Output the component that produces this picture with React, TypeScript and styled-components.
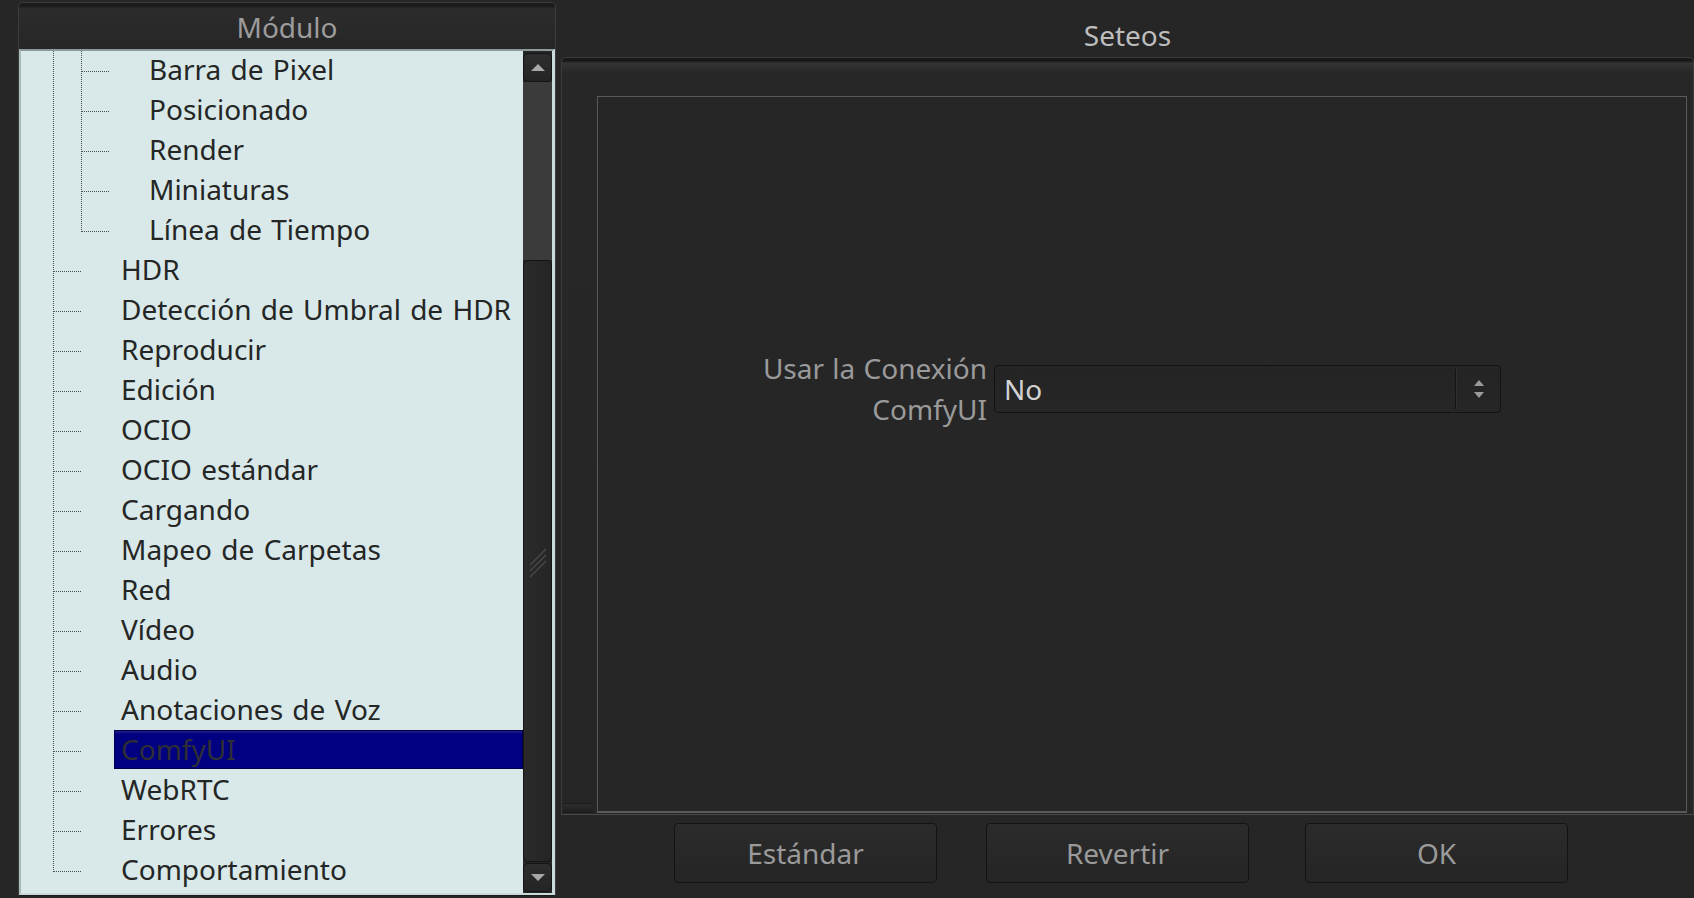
import styled, { createGlobalStyle } from 'styled-components';

type TreeItem = { label: string; level: 1 | 2; last?: boolean; selected?: boolean };

const items: TreeItem[] = [
  { label: 'Barra de Pixel', level: 2 },
  { label: 'Posicionado', level: 2 },
  { label: 'Render', level: 2 },
  { label: 'Miniaturas', level: 2 },
  { label: 'Línea de Tiempo', level: 2, last: true },
  { label: 'HDR', level: 1 },
  { label: 'Detección de Umbral de HDR', level: 1 },
  { label: 'Reproducir', level: 1 },
  { label: 'Edición', level: 1 },
  { label: 'OCIO', level: 1 },
  { label: 'OCIO estándar', level: 1 },
  { label: 'Cargando', level: 1 },
  { label: 'Mapeo de Carpetas', level: 1 },
  { label: 'Red', level: 1 },
  { label: 'Vídeo', level: 1 },
  { label: 'Audio', level: 1 },
  { label: 'Anotaciones de Voz', level: 1 },
  { label: 'ComfyUI', level: 1, selected: true },
  { label: 'WebRTC', level: 1 },
  { label: 'Errores', level: 1 },
  { label: 'Comportamiento', level: 1, last: true },
];

type GuideKind = 'pipe' | 'tee' | 'end';

function Guide({ kind }: { kind: GuideKind }) {
  return (
    <GuideCell>
      <svg width="28" height="40" shapeRendering="crispEdges">
        <line
          x1="0.5"
          y1="0"
          x2="0.5"
          y2={kind === 'end' ? 21 : 40}
          stroke="#4a4c4c"
          strokeDasharray="1 1"
        />
        {kind !== 'pipe' && (
          <line x1="1" y1="20.5" x2="28" y2="20.5" stroke="#4a4c4c" strokeDasharray="1 1" />
        )}
      </svg>
    </GuideCell>
  );
}

function TreeRow({ item }: { item: TreeItem }) {
  const own: GuideKind = item.last ? 'end' : 'tee';
  return (
    <Row>
      <RowIndent />
      {item.level === 2 ? (
        <>
          <Guide kind="pipe" />
          <Guide kind={own} />
        </>
      ) : (
        <Guide kind={own} />
      )}
      <RowLabel $selected={item.selected}>{item.label}</RowLabel>
    </Row>
  );
}

export default function App() {
  return (
    <>
      <GlobalStyle />
      <Window>
        <LeftPanel>
          <PanelHeader>Módulo</PanelHeader>
          <TreeBox>
            <Rows>
              {items.map((item) => (
                <TreeRow key={item.label} item={item} />
              ))}
            </Rows>
            <ScrollBar>
              <ArrowButton>
                <svg width="16" height="9">
                  <polygon points="1,8 8,1 15,8" fill="#a8a8a8" />
                </svg>
              </ArrowButton>
              <TroughTop />
              <Thumb>
                <svg width="18" height="40">
                  <line x1="1" y1="24" x2="17" y2="8" stroke="#4a4a4a" strokeWidth="1.2" />
                  <line x1="1" y1="30" x2="17" y2="14" stroke="#4a4a4a" strokeWidth="1.2" />
                  <line x1="1" y1="36" x2="17" y2="20" stroke="#4a4a4a" strokeWidth="1.2" />
                </svg>
              </Thumb>
              <ArrowButton>
                <svg width="16" height="9">
                  <polygon points="1,1 15,1 8,8" fill="#a8a8a8" />
                </svg>
              </ArrowButton>
            </ScrollBar>
          </TreeBox>
        </LeftPanel>

        <RightPanel>
          <PanelTitle>Seteos</PanelTitle>
          <SettingsFrame>
            <GroupBox>
              <FormRow>
                <FieldLabel>
                  Usar la Conexión
                  <br />
                  ComfyUI
                </FieldLabel>
                <Choice>
                  <ChoiceValue>No</ChoiceValue>
                  <ChoiceDivider />
                  <ChoiceArrows>
                    <svg width="12" height="22">
                      <polygon points="1,8 6,2 11,8" fill="#9a9a9a" />
                      <polygon points="1,14 11,14 6,20" fill="#9a9a9a" />
                    </svg>
                  </ChoiceArrows>
                </Choice>
              </FormRow>
            </GroupBox>
            <FrameCorner />
          </SettingsFrame>
          <ButtonRow>
            <DialogButton>Estándar</DialogButton>
            <DialogButton>Revertir</DialogButton>
            <DialogButton $shift={7}>OK</DialogButton>
          </ButtonRow>
        </RightPanel>
      </Window>
    </>
  );
}

const GlobalStyle = createGlobalStyle`
  html, body {
    margin: 0;
    background: #262626;
  }
  body {
    font-family: "Noto Sans", "Open Sans", sans-serif;
    font-size: 28px;
    word-spacing: 1px;
  }
  * {
    box-sizing: border-box;
  }
`;

const Window = styled.div`
  display: flex;
  gap: 5px;
  width: 1694px;
  height: 898px;
  padding-left: 18px;
  background: #262626;
  overflow: hidden;
`;

const LeftPanel = styled.section`
  display: flex;
  flex-direction: column;
  width: 538px;
  height: 894px;
  margin-top: 2px;
  border: 1px solid #3d3d3d;
  border-bottom-color: #1a1a1a;
  border-radius: 5px 5px 0 0;
  overflow: hidden;
`;

const PanelHeader = styled.header`
  height: 46px;
  padding-top: 4px;
  line-height: 40px;
  text-align: center;
  color: #9c9c9c;
  background: linear-gradient(to bottom, #1b1b1b 0, #1b1b1b 3px, #2c2c2c 6px, #262626 100%);
`;

const TreeBox = styled.div`
  display: flex;
  flex: 1;
  border-style: solid;
  border-width: 2px 3px 2px 2px;
  border-color: #8b9a9a #c9dada #c9dada #a9baba;
  background: #d9e8e8;
  overflow: hidden;
`;

const Rows = styled.div`
  display: flex;
  flex-direction: column;
  flex: 1;
  overflow: hidden;
  word-spacing: 2px;
`;

const Row = styled.div`
  display: flex;
  flex: 0 0 40px;
  height: 40px;
  align-items: stretch;
`;

const RowIndent = styled.span`
  flex: 0 0 32px;
`;

const GuideCell = styled.span`
  display: block;
  flex: 0 0 28px;
  height: 40px;

  svg {
    display: block;
  }
`;

const RowLabel = styled.span<{ $selected?: boolean }>`
  flex: 1;
  height: 39px;
  margin-top: ${({ $selected }) => ($selected ? '-1px' : '0')};
  margin-left: 33px;
  padding-left: ${({ $selected }) => ($selected ? '6px' : '7px')};
  line-height: ${({ $selected }) => ($selected ? '37px' : '36px')};
  white-space: nowrap;
  color: ${({ $selected }) => ($selected ? '#2e2e36' : '#242626')};
  background: ${({ $selected }) =>
    $selected ? 'linear-gradient(to bottom, #24248a 0, #000080 3px, #000080 100%)' : 'transparent'};
  border: ${({ $selected }) => ($selected ? '1px solid #00004a' : 'none')};
`;

const ScrollBar = styled.div`
  display: flex;
  flex-direction: column;
  flex: 0 0 29px;
  background: #262626;
  padding: 2px 0 1px;
`;

const ArrowButton = styled.div`
  display: flex;
  align-items: center;
  justify-content: center;
  flex: 0 0 29px;
  border: 1px solid #141414;
  border-radius: 5px;
  background: linear-gradient(to bottom, #2e2e2e, #242424);
`;

const TroughTop = styled.div`
  flex: 0 0 178px;
  background: #3b3b3b;
`;

const Thumb = styled.div`
  display: flex;
  align-items: center;
  justify-content: center;
  flex: 1;
  margin-bottom: 1px;
  border: 1px solid #141414;
  border-radius: 5px;
  background: linear-gradient(to right, #2a2a2a, #252525);
`;

const RightPanel = styled.section`
  display: flex;
  flex-direction: column;
  flex: 1;
`;

const PanelTitle = styled.h2`
  height: 57px;
  margin: 0;
  padding-top: 15px;
  line-height: 40px;
  font-size: 28px;
  font-weight: 400;
  text-align: center;
  color: #bdbdbd;
`;

const SettingsFrame = styled.div`
  position: relative;
  display: flex;
  height: 758px;
  padding: 38px 6px 1px 35px;
  border: 1px solid #3c3c3c;
  border-bottom-color: #4a4a4a;
  border-radius: 5px 5px 0 0;
  background: linear-gradient(
    to bottom,
    #181818 0,
    #181818 3px,
    #333333 5px,
    #272727 16px,
    #262626 100%
  );
`;

const FrameCorner = styled.span`
  position: absolute;
  left: 1px;
  bottom: 1px;
  width: 30px;
  height: 10px;
  border-top: 1px solid #1a1a1a;
  background: linear-gradient(to bottom, #2e2e2e, #1c1c1c);
`;

const GroupBox = styled.div`
  flex: 1;
  border: 1px solid #595959;
  border-bottom-width: 2px;
  background: #262626;
`;

const FormRow = styled.div`
  display: flex;
  align-items: center;
  padding-top: 251px;
`;

const FieldLabel = styled.label`
  flex: 0 0 396px;
  padding-right: 7px;
  line-height: 41px;
  text-align: right;
  color: #9a9a9a;
`;

const Choice = styled.div`
  display: flex;
  align-items: center;
  width: 507px;
  height: 48px;
  border: 1px solid #131313;
  border-radius: 4px;
  background: linear-gradient(to bottom, #242424, #262626);
`;

const ChoiceValue = styled.span`
  flex: 1;
  padding-left: 9px;
  color: #d2d2d2;
`;

const ChoiceDivider = styled.span`
  width: 2px;
  height: 40px;
  border-left: 1px solid #141414;
  border-right: 1px solid #303030;
`;

const ChoiceArrows = styled.span`
  display: flex;
  align-items: center;
  justify-content: center;
  width: 43px;
`;

const ButtonRow = styled.div`
  display: flex;
  gap: 49px;
  padding: 8px 0 0 113px;
`;

const DialogButton = styled.button<{ $shift?: number }>`
  width: 263px;
  height: 60px;
  margin-left: ${({ $shift }) => $shift ?? 0}px;
  padding: 0;
  border: 1px solid #131313;
  border-radius: 4px;
  background: linear-gradient(to bottom, #2b2b2b, #252525);
  font-family: inherit;
  font-size: 28px;
  color: #9a9a9a;
`;
